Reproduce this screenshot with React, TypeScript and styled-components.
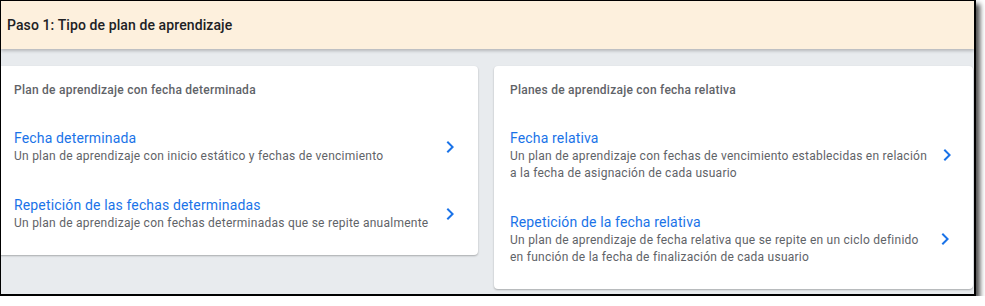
import { createGlobalStyle } from 'styled-components';
import styled from 'styled-components';

const GlobalStyle = createGlobalStyle`
  html, body {
    margin: 0;
    padding: 0;
    background: #ffffff;
  }
  body {
    font-family: Roboto, 'Noto Sans', Arial, sans-serif;
  }
`;

const Frame = styled.div`
  box-sizing: border-box;
  width: 976px;
  height: 296px;
  border-top: 1px solid #000;
  border-left: 1px solid #000;
  border-right: 2px solid #000;
  border-bottom: 2px solid #000;
  box-shadow: 4px 4px 5px rgba(0, 0, 0, 0.7);
  background: #e8ebee;
  overflow: hidden;
  display: flex;
  flex-direction: column;
`;

const Header = styled.header`
  height: 48px;
  flex-shrink: 0;
  display: flex;
  align-items: center;
  padding: 0 6px;
  background: #fdf0dd;
  box-shadow: 0 2px 3px rgba(0, 0, 0, 0.22);
  position: relative;
  z-index: 1;
  font-size: 14px;
  font-weight: 500;
  letter-spacing: 0.1px;
  color: #202124;
`;

const Columns = styled.div`
  display: grid;
  grid-template-columns: 480px 479px;
  column-gap: 16px;
  align-items: start;
  padding-top: 17px;
  margin-left: -3px;
`;

const Card = styled.section`
  background: #ffffff;
  border-radius: 4px;
  box-shadow: 0 1px 2px rgba(0, 0, 0, 0.28);
  padding: 16px 16px 8px;
`;

const CardTitle = styled.h2`
  margin: 0 0 15px;
  font-size: 12px;
  line-height: 16px;
  font-weight: 500;
  letter-spacing: 0.25px;
  color: #5f6368;
`;

const Option = styled.a`
  display: flex;
  align-items: center;
  justify-content: space-between;
  gap: 8px;
  padding: 15px 0;
  text-decoration: none;
  cursor: pointer;
`;

const OptionText = styled.div`
  display: flex;
  flex-direction: column;
`;

const OptionTitle = styled.span`
  font-size: 14px;
  line-height: 20px;
  letter-spacing: 0.15px;
  color: #1a73e8;
`;

const OptionDesc = styled.span`
  font-size: 12px;
  line-height: 17px;
  letter-spacing: 0.25px;
  color: #5f6368;
  white-space: nowrap;
`;

const Chevron = styled.svg`
  width: 24px;
  height: 24px;
  flex-shrink: 0;
  fill: #1a73e8;
`;

type Item = { title: string; lines: string[] };

const fixed: Item[] = [
  {
    title: 'Fecha determinada',
    lines: ['Un plan de aprendizaje con inicio estático y fechas de vencimiento'],
  },
  {
    title: 'Repetición de las fechas determinadas',
    lines: ['Un plan de aprendizaje con fechas determinadas que se repite anualmente'],
  },
];

const relative: Item[] = [
  {
    title: 'Fecha relativa',
    lines: [
      'Un plan de aprendizaje con fechas de vencimiento establecidas en relación',
      'a la fecha de asignación de cada usuario',
    ],
  },
  {
    title: 'Repetición de la fecha relativa',
    lines: [
      'Un plan de aprendizaje de fecha relativa que se repite en un ciclo definido',
      'en función de la fecha de finalización de cada usuario',
    ],
  },
];

function PlanOption({ item }: { item: Item }) {
  return (
    <Option>
      <OptionText>
        <OptionTitle>{item.title}</OptionTitle>
        {item.lines.map((l) => (
          <OptionDesc key={l}>{l}</OptionDesc>
        ))}
      </OptionText>
      <Chevron viewBox="0 0 24 24">
        <path d="M10 6L8.59 7.41 13.17 12l-4.58 4.59L10 18l6-6z" />
      </Chevron>
    </Option>
  );
}

export default function App() {
  return (
    <>
      <GlobalStyle />
      <Frame>
        <Header>Paso 1: Tipo de plan de aprendizaje</Header>
        <Columns>
          <Card>
            <CardTitle>Plan de aprendizaje con fecha determinada</CardTitle>
            {fixed.map((it) => (
              <PlanOption key={it.title} item={it} />
            ))}
          </Card>
          <Card>
            <CardTitle>Planes de aprendizaje con fecha relativa</CardTitle>
            {relative.map((it) => (
              <PlanOption key={it.title} item={it} />
            ))}
          </Card>
        </Columns>
      </Frame>
    </>
  );
}
